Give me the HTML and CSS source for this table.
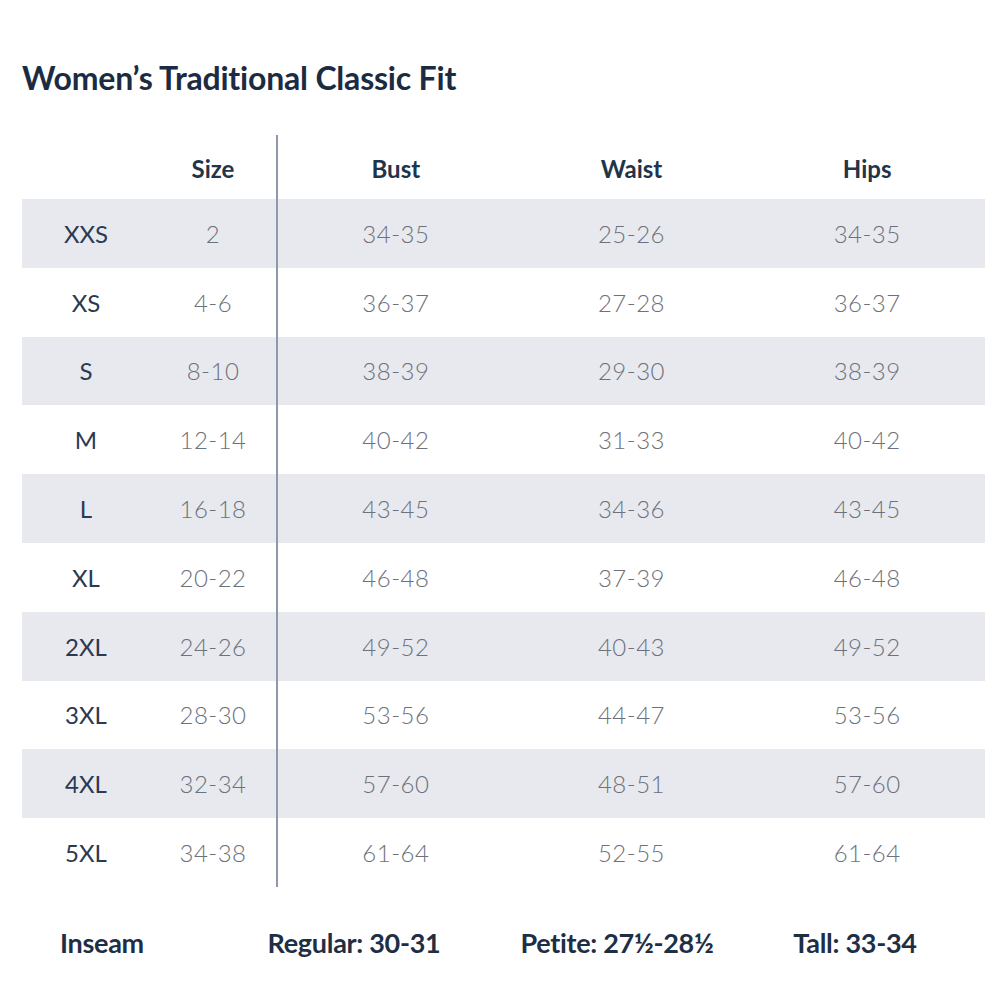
FILE: index.html
```html
<!DOCTYPE html>
<html>
<head>
<meta charset="utf-8">
<link rel="stylesheet" href="styles.css">
</head>
<body>
<div class="page">
  <h1 class="title">Women’s Traditional Classic Fit</h1>
  <div class="table">
    <div class="row head">
      <div class="cell"></div>
      <div class="cell sep">Size</div>
      <div class="cell">Bust</div>
      <div class="cell">Waist</div>
      <div class="cell">Hips</div>
    </div>
    <div class="row stripe"><div class="cell label">XXS</div><div class="cell sep num">2</div><div class="cell num">34-35</div><div class="cell num">25-26</div><div class="cell num">34-35</div></div>
    <div class="row"><div class="cell label">XS</div><div class="cell sep num">4-6</div><div class="cell num">36-37</div><div class="cell num">27-28</div><div class="cell num">36-37</div></div>
    <div class="row stripe"><div class="cell label">S</div><div class="cell sep num">8-10</div><div class="cell num">38-39</div><div class="cell num">29-30</div><div class="cell num">38-39</div></div>
    <div class="row"><div class="cell label">M</div><div class="cell sep num">12-14</div><div class="cell num">40-42</div><div class="cell num">31-33</div><div class="cell num">40-42</div></div>
    <div class="row stripe"><div class="cell label">L</div><div class="cell sep num">16-18</div><div class="cell num">43-45</div><div class="cell num">34-36</div><div class="cell num">43-45</div></div>
    <div class="row"><div class="cell label">XL</div><div class="cell sep num">20-22</div><div class="cell num">46-48</div><div class="cell num">37-39</div><div class="cell num">46-48</div></div>
    <div class="row stripe"><div class="cell label">2XL</div><div class="cell sep num">24-26</div><div class="cell num">49-52</div><div class="cell num">40-43</div><div class="cell num">49-52</div></div>
    <div class="row"><div class="cell label">3XL</div><div class="cell sep num">28-30</div><div class="cell num">53-56</div><div class="cell num">44-47</div><div class="cell num">53-56</div></div>
    <div class="row stripe"><div class="cell label">4XL</div><div class="cell sep num">32-34</div><div class="cell num">57-60</div><div class="cell num">48-51</div><div class="cell num">57-60</div></div>
    <div class="row"><div class="cell label">5XL</div><div class="cell sep num">34-38</div><div class="cell num">61-64</div><div class="cell num">52-55</div><div class="cell num">61-64</div></div>
  </div>
  <div class="inseam">
    <div class="ins">Inseam</div>
    <div class="ins">Regular: 30-31</div>
    <div class="ins">Petite: 27½-28½</div>
    <div class="ins">Tall: 33-34</div>
  </div>
</div>
</body>
</html>
```

FILE: styles.css
```css
html, body {
  margin: 0;
  padding: 0;
  background: #ffffff;
}
body {
  font-family: Lato, "Noto Sans", sans-serif;
  color: #1e3047;
}
.page {
  width: 1000px;
  height: 1000px;
  padding: 56px 15px 0 22px;
  box-sizing: border-box;
}
.title {
  margin: 0 0 35px 0;
  height: 44px;
  font-size: 32px;
  font-weight: 700;
  line-height: 44px;
  color: #1b2c42;
  letter-spacing: -0.2px;
}
.table {
  width: 963px;
}
.row {
  display: grid;
  grid-template-columns: 128px 128px 1fr 1fr 1fr;
  height: 68.8px;
}
.row.head {
  height: 64px;
}
.row.stripe {
  background: #e7e9ee;
}
.cell {
  display: flex;
  align-items: center;
  justify-content: center;
  font-size: 24px;
}
.cell.sep {
  border-right: 2px solid #8d99aa;
}
.head .cell {
  font-weight: 700;
  font-size: 24px;
  color: #22344a;
  padding-top: 2px;
}
.cell.label {
  color: #2a3a52;
  font-weight: 400;
}
.cell.num {
  color: #6c717b;
  font-weight: 300;
  letter-spacing: 0.5px;
}
.inseam {
  display: grid;
  grid-template-columns: 160px 344px 182px 294px;
  height: 112px;
  align-items: center;
}
.ins {
  display: flex;
  justify-content: center;
  white-space: nowrap;
  font-weight: 700;
  font-size: 27px;
  color: #1e2f45;
  letter-spacing: -0.3px;
}
```
